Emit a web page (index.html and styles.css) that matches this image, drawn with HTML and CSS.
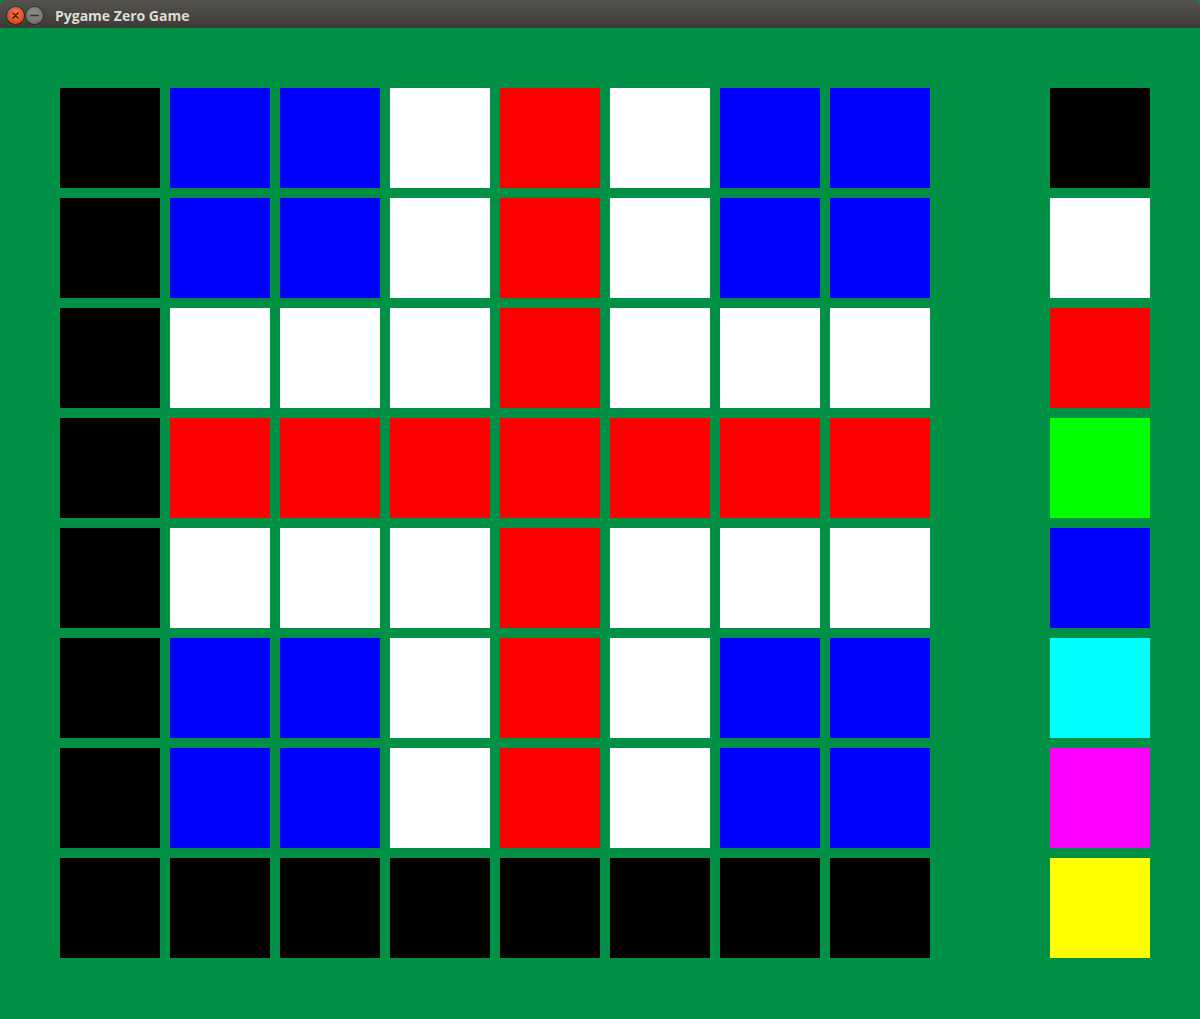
FILE: index.html
```html
<!DOCTYPE html>
<html>
<head>
<meta charset="utf-8">
<link rel="stylesheet" href="styles.css">
</head>
<body>
<div class="window">
  <div class="titlebar">
    <div class="btn close">
      <svg width="17" height="17" viewBox="0 0 17 17"><path d="M6 6 L11 11 M11 6 L6 11" stroke="#4a1606" stroke-width="1.4" stroke-linecap="round"/></svg>
    </div>
    <div class="btn minimize">
      <svg width="17" height="17" viewBox="0 0 17 17"><path d="M5 8.5 L12 8.5" stroke="#33332f" stroke-width="1.6" stroke-linecap="round"/></svg>
    </div>
    <span class="title">Pygame Zero Game</span>
  </div>
  <div class="canvas">
    <div class="grid">
      <div class="c k"></div><div class="c b"></div><div class="c b"></div><div class="c w"></div><div class="c r"></div><div class="c w"></div><div class="c b"></div><div class="c b"></div>
      <div class="c k"></div><div class="c b"></div><div class="c b"></div><div class="c w"></div><div class="c r"></div><div class="c w"></div><div class="c b"></div><div class="c b"></div>
      <div class="c k"></div><div class="c w"></div><div class="c w"></div><div class="c w"></div><div class="c r"></div><div class="c w"></div><div class="c w"></div><div class="c w"></div>
      <div class="c k"></div><div class="c r"></div><div class="c r"></div><div class="c r"></div><div class="c r"></div><div class="c r"></div><div class="c r"></div><div class="c r"></div>
      <div class="c k"></div><div class="c w"></div><div class="c w"></div><div class="c w"></div><div class="c r"></div><div class="c w"></div><div class="c w"></div><div class="c w"></div>
      <div class="c k"></div><div class="c b"></div><div class="c b"></div><div class="c w"></div><div class="c r"></div><div class="c w"></div><div class="c b"></div><div class="c b"></div>
      <div class="c k"></div><div class="c b"></div><div class="c b"></div><div class="c w"></div><div class="c r"></div><div class="c w"></div><div class="c b"></div><div class="c b"></div>
      <div class="c k"></div><div class="c k"></div><div class="c k"></div><div class="c k"></div><div class="c k"></div><div class="c k"></div><div class="c k"></div><div class="c k"></div>
    </div>
    <div class="palette">
      <div class="c k"></div>
      <div class="c w"></div>
      <div class="c r"></div>
      <div class="c g"></div>
      <div class="c b"></div>
      <div class="c cy"></div>
      <div class="c m"></div>
      <div class="c y"></div>
    </div>
  </div>
</div>
</body>
</html>
```

FILE: styles.css
```css
html, body {
  margin: 0;
  padding: 0;
  background: #009046;
  overflow: hidden;
}
.window {
  width: 1200px;
  height: 1019px;
  display: flex;
  flex-direction: column;
}
.titlebar {
  height: 28px;
  flex: none;
  background: linear-gradient(#55534e, #3c3b37);
  border-radius: 5px 5px 0 0;
  display: flex;
  align-items: center;
  padding: 2px 0 0 7px;
  box-sizing: border-box;
}
.btn {
  width: 17px;
  height: 17px;
  border-radius: 50%;
  margin-right: 2px;
  display: flex;
}
.btn.close {
  background: radial-gradient(circle at 50% 35%, #f47a4a, #df4b1b 70%, #c33d10);
  box-shadow: 0 0 0 1px rgba(0,0,0,0.35);
}
.btn.minimize {
  background: radial-gradient(circle at 50% 35%, #8f8e89, #73726d 70%, #5e5d58);
  box-shadow: 0 0 0 1px rgba(0,0,0,0.35);
}
.title {
  margin-left: 10px;
  font-family: "Open Sans", "DejaVu Sans", sans-serif;
  font-weight: bold;
  font-size: 14px;
  color: #dfdbd2;
}
.canvas {
  flex: 1;
  background: #009046;
  display: flex;
  padding: 60px 0 0 60px;
  gap: 120px;
}
.grid {
  display: grid;
  grid-template-columns: repeat(8, 100px);
  grid-auto-rows: 100px;
  gap: 10px;
}
.palette {
  display: grid;
  grid-template-columns: 100px;
  grid-auto-rows: 100px;
  gap: 10px;
}
.c { width: 100px; height: 100px; }
.k { background: #000000; }
.w { background: #ffffff; }
.r { background: #ff0000; }
.b { background: #0000ff; }
.g { background: #00ff00; }
.cy { background: #00ffff; }
.m { background: #ff00ff; }
.y { background: #ffff00; }
```
